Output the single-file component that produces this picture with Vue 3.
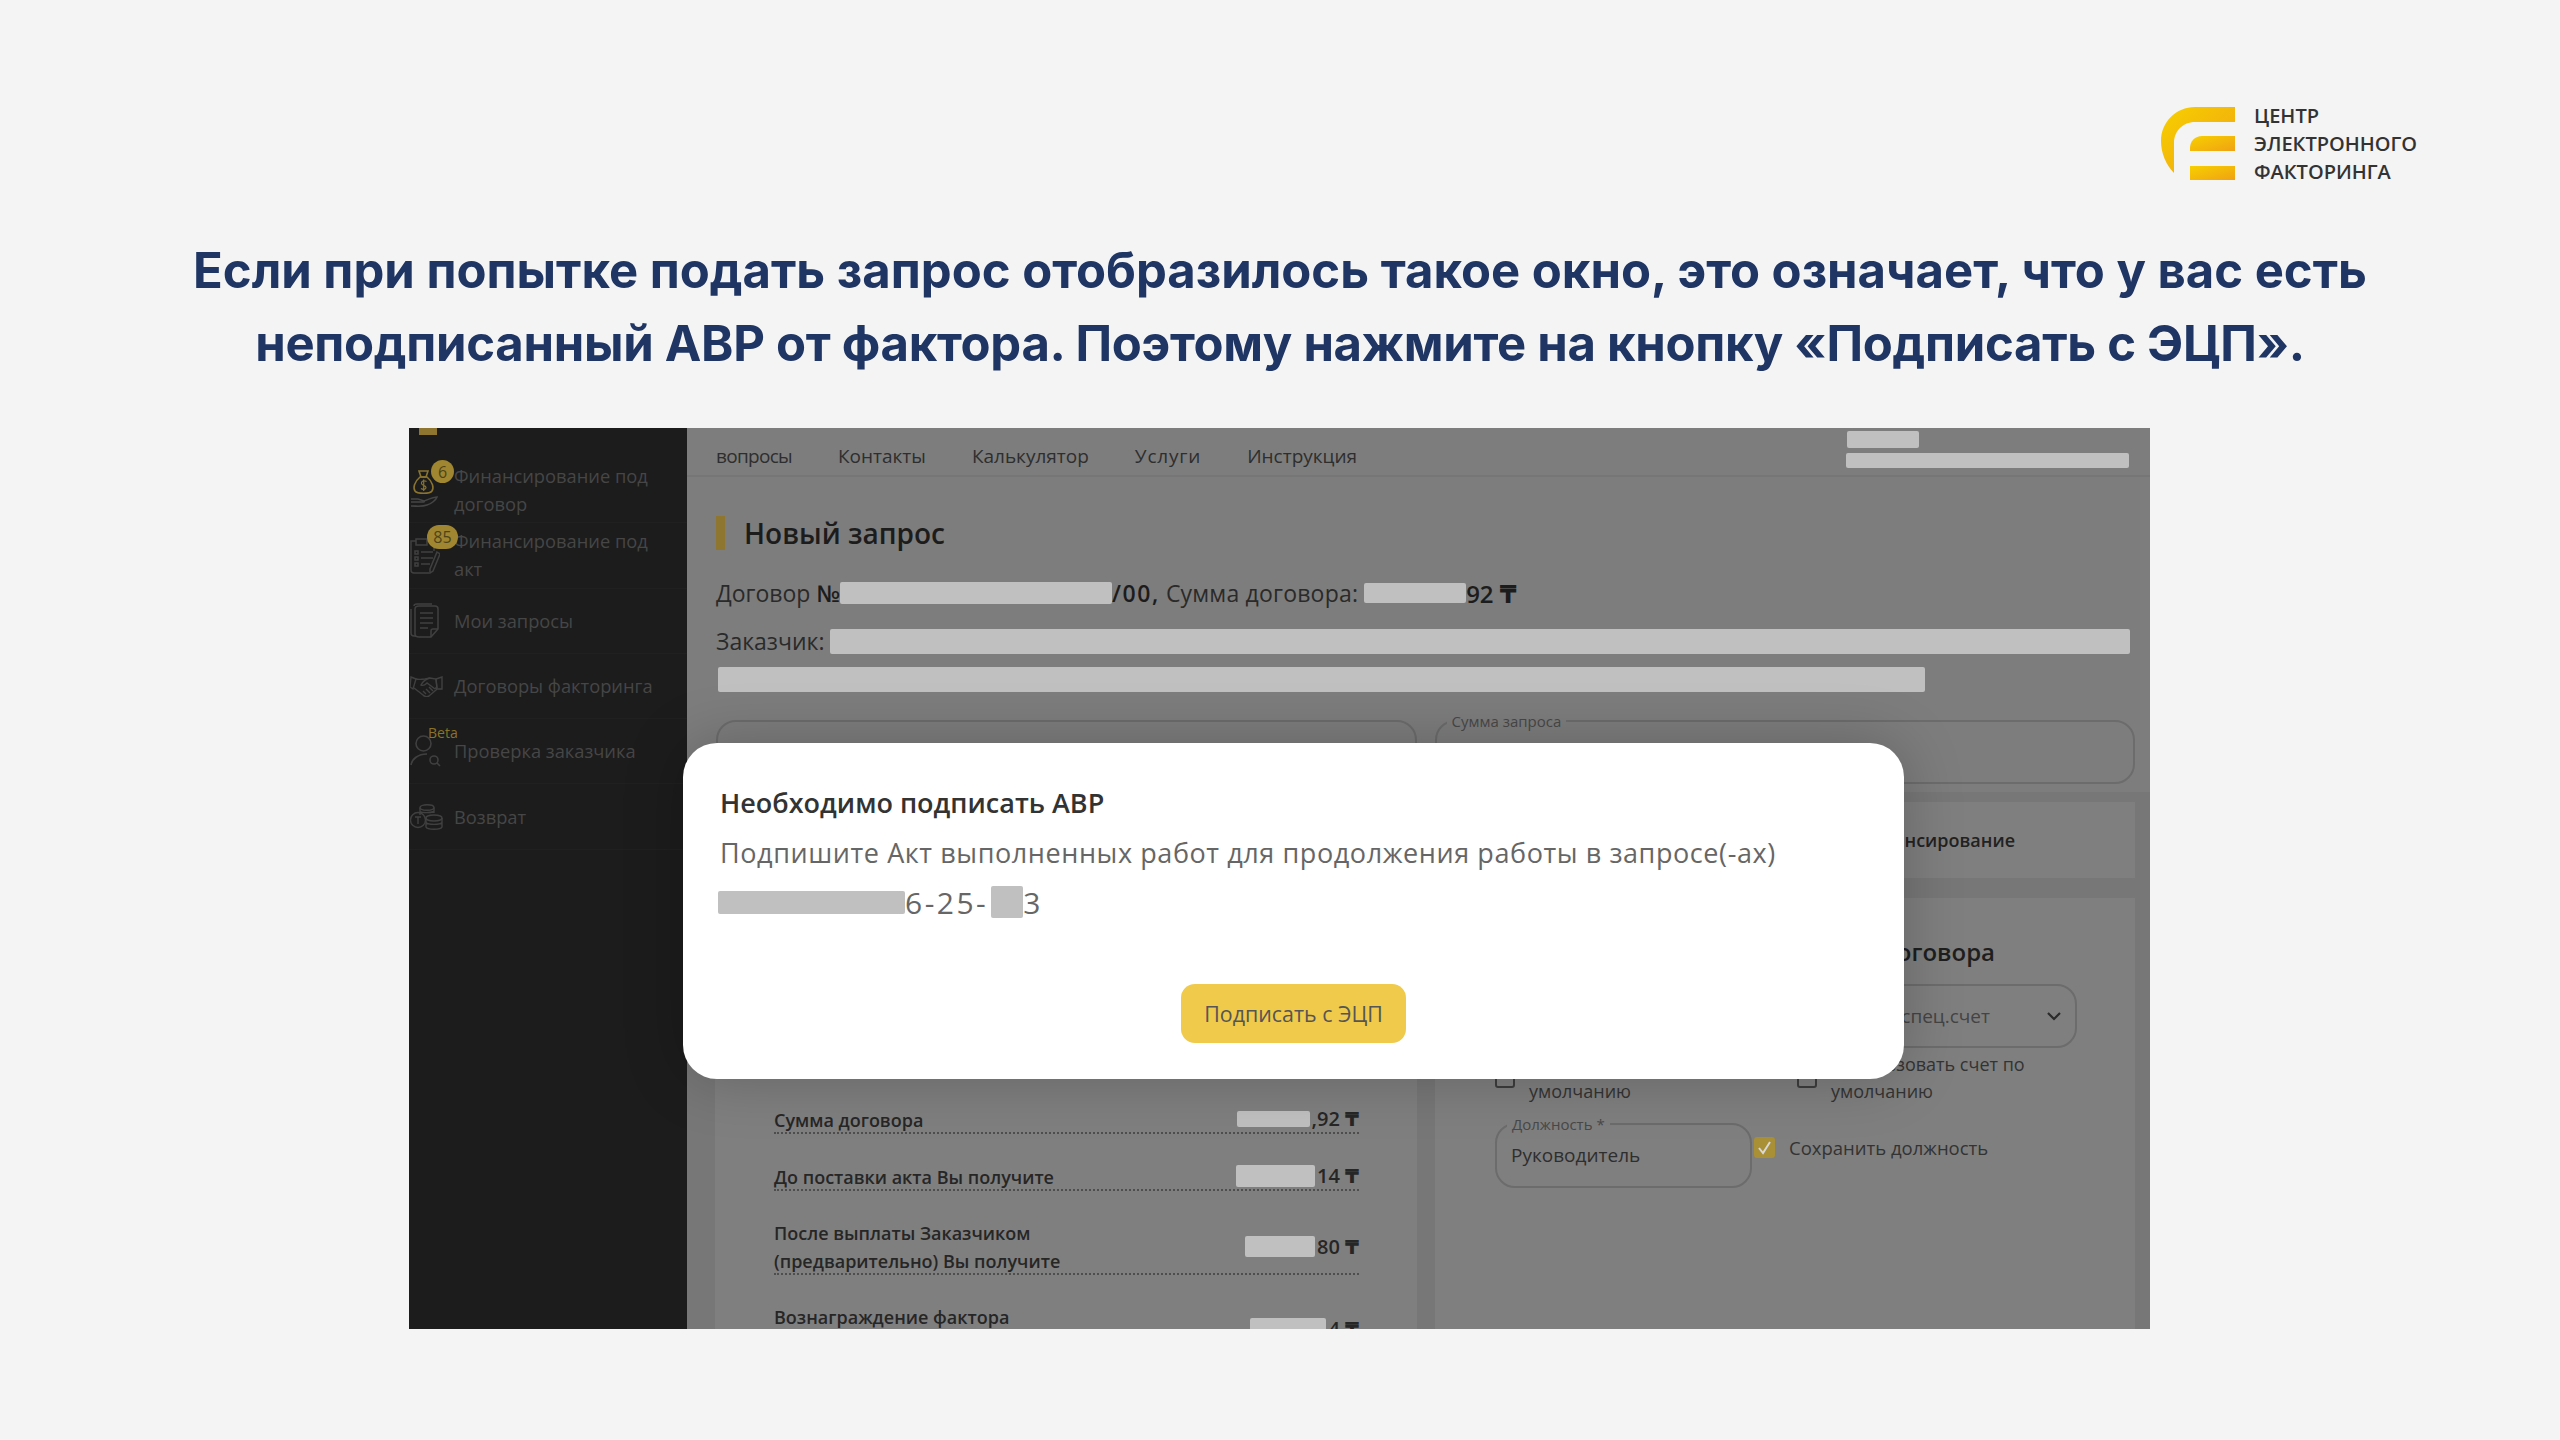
<script setup>
// строки расчёта в левой карточке
const calcRows = [
  { lines: ['Сумма договора'], hidden: 73, hiddenH: 16, tail: ',92 ₸' },
  { lines: ['До поставки акта Вы получите'], hidden: 79, hiddenH: 22, tail: '14 ₸' },
  { lines: ['После выплаты Заказчиком', '(предварительно) Вы получите'], hidden: 70, hiddenH: 21, tail: '80 ₸' },
  { lines: ['Вознаграждение фактора'], hidden: 76, hiddenH: 22, tail: '4 ₸' }
]
const navLinks = ['вопросы', 'Контакты', 'Калькулятор', 'Услуги', 'Инструкция']
</script>

<template>
  <div class="page">
    <header class="brand">
      <svg class="brand-mark" viewBox="0 0 74 73" width="74" height="73">
        <defs>
          <linearGradient id="logoFill" x1="0" y1="0" x2="1" y2="1">
            <stop offset="0" stop-color="#f7d000" />
            <stop offset="1" stop-color="#f0a212" />
          </linearGradient>
        </defs>
        <path fill="url(#logoFill)" d="M74 0H34C15 0 0 15 0 34C0 46 5 58 13 66V36C13 24 22 15 34 15H74Z" />
        <path fill="url(#logoFill)" d="M29 44V41C29 34 34 29 41 29H74V44Z" />
        <path fill="url(#logoFill)" d="M29 59H74V73H29Z" />
      </svg>
      <div class="brand-name">ЦЕНТР<br />ЭЛЕКТРОННОГО<br />ФАКТОРИНГА</div>
    </header>

    <h1 class="headline">
      Если при попытке подать запрос отобразилось такое окно, это означает, что у вас есть<br />
      <span class="headline-second">неподписанный АВР от фактора. Поэтому нажмите на кнопку «Подписать с ЭЦП».</span>
    </h1>

    <section class="shot">
      <aside class="sidebar">
        <span class="side-stub"></span>
        <div class="side-item">
          <svg class="side-icon" viewBox="0 0 30 42" width="30" height="42" fill="none" stroke-width="1.6">
            <g stroke="#8a7430">
              <path d="M9 2H18L16 8H11Z" />
              <path d="M10 8C4 13 3 19 5 22C7 25 20 25 22 22C24 19 23 13 17 8Z" />
              <path d="M16.500 12.500C14 11 11 12 11.500 14.500C12 17 16 16 16 18.500C16 20.500 13 21 11 19.500M13.700 10.500V22" stroke-width="1.200" />
            </g>
            <g stroke="#454545">
              <path d="M1 30H8L14 32C17 31 23 28 27 28C26 31 21 35 17 36C12 38 7 37 1 37" />
              <path d="M1 33H11C13 33 15 33 14 32" />
            </g>
          </svg>
          <span class="side-text">Финансирование под<br />договор</span>
          <span class="side-badge badge-round">6</span>
        </div>
        <div class="side-item">
          <svg class="side-icon" viewBox="0 0 30 37" width="30" height="37" fill="none" stroke="#404040" stroke-width="1.5">
            <path d="M6 4H1V33C1 35 2 36 4 36H19" />
            <path d="M17 4H24V14" />
            <path d="M6 8H17V2H6Z" />
            <path d="M5 14H8V17H5ZM5 20H8V23H5ZM5 26H8V29H5Z" />
            <path d="M11 15H23M11 21H23M11 27H20" />
            <path d="M27 15L30 17L23 34L20 36L20 32Z" />
          </svg>
          <span class="side-text">Финансирование под<br />акт</span>
          <span class="side-badge badge-pill">85</span>
        </div>
        <div class="side-item">
          <svg class="side-icon" viewBox="0 0 30 36" width="30" height="36" fill="none" stroke="#404040" stroke-width="1.5">
            <path d="M1 6V30C1 32 2 33 4 33H6" />
            <path d="M4 3C4 2 5 1 7 1H22" />
            <path d="M9 3H25C27 3 28 4 28 6V26L21 34H9C6 34 5 33 5 31V6C5 4 7 3 9 3Z" />
            <path d="M21 34V28C21 27 22 26 23 26H28" />
            <path d="M10 10H23M10 15H23M10 20H23M10 25H18" />
          </svg>
          <span class="side-text">Мои запросы</span>
        </div>
        <div class="side-item">
          <svg class="side-icon" viewBox="0 0 33 21" width="33" height="21" fill="none" stroke="#404040" stroke-width="1.4">
            <path d="M1 1L6 3L3 13L0 11Z" />
            <path d="M32 1L26 3L27 13L32 13Z" />
            <path d="M6 3C9 4 12 3 15 3L20 2L26 3L27 12" />
            <path d="M4 12L13 19C15 21 17 21 19 20L26 14C27 13 26 12 25 12" />
            <path d="M20 2C16 3 13 5 11 9C13 10 15 9 17 7L25 13" />
            <path d="M13 15L16 18M16 13L20 17M19 11L23 15" />
          </svg>
          <span class="side-text">Договоры факторинга</span>
        </div>
        <div class="side-item">
          <svg class="side-icon" viewBox="0 0 31 32" width="31" height="32" fill="none" stroke="#404040" stroke-width="1.6">
            <circle cx="13.500" cy="8.500" r="7.500" />
            <path d="M1 30C2 24 8 19 17 19" />
            <circle cx="24" cy="25" r="4" />
            <path d="M27 28L30 31" />
          </svg>
          <span class="side-text">Проверка заказчика</span>
          <span class="side-beta">Beta</span>
        </div>
        <div class="side-item">
          <svg class="side-icon" viewBox="0 0 33 26" width="33" height="26" fill="none" stroke="#404040" stroke-width="1.4">
            <ellipse cx="17" cy="3.500" rx="7" ry="2.700" />
            <path d="M10 3.500V11M24 3.500V9M10 7.500C12 9 20 9 24 7.500" />
            <circle cx="8" cy="16" r="7.500" />
            <path d="M5 13H11M8 13V20" />
            <ellipse cx="24" cy="14" rx="8" ry="3" />
            <path d="M16 14V23C17 26 31 26 32 23V14M16 18.500C18 21 30 21 32 18.500" />
          </svg>
          <span class="side-text">Возврат</span>
        </div>
      </aside>

      <div class="main">
        <nav class="topbar">
          <div class="nav-links">
            <span v-for="link in navLinks" :key="link">{{ link }}</span>
          </div>
          <div class="account">
            <span class="mask account-a"></span>
            <span class="mask account-b"></span>
          </div>
        </nav>

        <div class="request">
          <h2 class="request-title">Новый запрос</h2>
          <div class="info-line">
            Договор&nbsp;<b>№</b><span class="mask contract-no"></span><b class="contract-tail">/00,</b>&nbsp;<span class="contract-label">Сумма договора:</span><span class="mask contract-sum"></span><b class="sum-tail">92 ₸</b>
          </div>
          <div class="info-line customer">Заказчик:<span class="mask customer-name"></span></div>
          <span class="mask customer-extra"></span>
          <div class="field-row">
            <div class="field"></div>
            <div class="field">
              <span class="field-label">Сумма запроса</span>
            </div>
          </div>
        </div>

        <div class="lower">
          <div class="card calc">
            <div v-for="row in calcRows" :key="row.tail" class="calc-row">
              <div class="calc-label">
                <div v-for="line in row.lines" :key="line">{{ line }}</div>
              </div>
              <div class="calc-value">
                <span class="mask" :style="{ width: row.hidden + 'px', height: row.hiddenH + 'px' }"></span>
                <b>{{ row.tail }}</b>
              </div>
            </div>
          </div>

          <div class="right-col">
            <div class="card tab-card">Финансирование</div>
            <div class="card details">
              <h3 class="details-title">Реквизиты договора</h3>
              <div class="select">
                <span>Основной спец.счет</span>
                <svg viewBox="0 0 14 9" width="14" height="9" fill="none" stroke="#2b2b2b" stroke-width="2.200">
                  <path d="M1 1L7 7L13 1" />
                </svg>
              </div>
              <div class="defaults">
                <div class="default-item">
                  <span class="box"></span>
                  <span>Использовать счет по<br />умолчанию</span>
                </div>
                <div class="default-item">
                  <span class="box"></span>
                  <span>Использовать счет по<br />умолчанию</span>
                </div>
              </div>
              <div class="position-row">
                <div class="field position-field">
                  <span class="field-label">Должность *</span>
                  Руководитель
                </div>
                <span class="box-checked">
                  <svg viewBox="0 0 21 21" width="21" height="21" fill="none" stroke="#d8d8d8" stroke-width="2">
                    <path d="M5 11L9 16L16 5" />
                  </svg>
                </span>
                <span class="position-save">Сохранить должность</span>
              </div>
            </div>
          </div>
        </div>

        <div class="modal">
          <h3 class="modal-title">Необходимо подписать АВР</h3>
          <p class="modal-text">Подпишите Акт выполненных работ для продолжения работы в запросе(-ах)</p>
          <p class="modal-number">
            <span class="mask number-a"></span>6-25-<span class="mask number-b"></span>3
          </p>
          <button class="modal-btn">Подписать с ЭЦП</button>
        </div>
      </div>
    </section>
  </div>
</template>

<style scoped>
.page {
  width: 2560px;
  height: 1440px;
  background: #f4f4f4;
  font-family: "Open Sans", "DejaVu Sans", sans-serif;
  overflow: hidden;
}

/* логотип */
.brand {
  display: flex;
  justify-content: flex-end;
  align-items: flex-start;
  gap: 19px;
  padding: 102px 144px 0 0;
}
.brand-mark {
  flex: none;
  display: block;
  margin-top: 5px;
}
.brand-name {
  font-size: 20px;
  line-height: 28px;
  font-weight: 600;
  color: #333;
  width: 162px;
  white-space: nowrap;
}

.headline {
  margin: 48px 0 0;
  font-family: Inter, "Liberation Sans", sans-serif;
  font-size: 49px;
  line-height: 73px;
  font-weight: 700;
  color: #1f3564;
  text-align: center;
  white-space: nowrap;
}
.headline-second {
  letter-spacing: -0.28px;
}

/* скриншот */
.shot {
  display: flex;
  width: 1741px;
  height: 901px;
  margin: 48px 0 0 409px;
  background: #7d7d7d;
  overflow: hidden;
}

.sidebar {
  position: relative;
  flex: none;
  width: 278px;
  padding-top: 30px;
  box-sizing: border-box;
  background: #1c1c1c;
}
.side-stub {
  position: absolute;
  top: 0;
  left: 10px;
  width: 18px;
  height: 7px;
  background: #8f7630;
}
.side-item {
  position: relative;
  display: flex;
  align-items: center;
  height: 65.3px;
  box-sizing: border-box;
  border-bottom: 1px solid #202020;
}
.side-icon {
  flex: none;
  display: block;
  margin-left: 1px;
  margin-right: auto;
}
.side-text {
  flex: none;
  width: 233px;
  font-size: 18.300px;
  line-height: 28px;
  color: #464646;
  white-space: nowrap;
}
.side-badge {
  position: absolute;
  display: flex;
  align-items: center;
  justify-content: center;
  background: #a08630;
  color: #4e4418;
  font-size: 16px;
}
.badge-round {
  top: 2px;
  left: 22px;
  width: 23px;
  height: 23px;
  border-radius: 50%;
}
.badge-pill {
  top: 2px;
  left: 18px;
  width: 31px;
  height: 24px;
  border-radius: 12px;
}
.side-beta {
  position: absolute;
  top: 4px;
  left: 19px;
  font-size: 14px;
  line-height: 20px;
  color: #8a7326;
}

.main {
  position: relative;
  flex: 1;
  display: flex;
  flex-direction: column;
  min-width: 0;
}

.topbar {
  flex: none;
  display: flex;
  justify-content: space-between;
  height: 49px;
  box-sizing: border-box;
  padding: 3px 21px 0 29px;
  border-bottom: 2px solid #767676;
}
.nav-links {
  display: flex;
  gap: 46px;
  padding-top: 12px;
  font-size: 19px;
  line-height: 26px;
  color: #2e2e2e;
}
.nav-links span:first-child {
  letter-spacing: -0.7px;
}
.nav-links span:nth-child(4) {
  letter-spacing: 0.8px;
}
.account {
  display: flex;
  flex-direction: column;
  gap: 5px;
}

.mask {
  display: inline-block;
  flex: none;
  background: #c0c0c0;
  border-radius: 2px;
}
.account-a {
  width: 72px;
  height: 17px;
  margin-left: 1px;
}
.account-b {
  width: 283px;
  height: 15px;
}

.request {
  flex: none;
  padding: 39px 15px 0 29px;
}
.request-title {
  margin: 0;
  height: 34px;
  padding-left: 19px;
  border-left: 9px solid #8f7630;
  box-sizing: border-box;
  font-size: 28px;
  line-height: 34px;
  font-weight: 600;
  color: #1c1c1c;
}
.info-line {
  display: flex;
  align-items: center;
  height: 30px;
  margin-top: 28px;
  font-size: 23px;
  color: #2a2a2a;
  white-space: nowrap;
}
.info-line b {
  font-weight: 600;
  color: #1c1c1c;
}
.contract-tail {
  letter-spacing: 1.6px;
}
.contract-label {
  letter-spacing: 0.2px;
}
.sum-tail {
  font-size: 24px;
}
.customer {
  margin-top: 18px;
}
.contract-no {
  width: 272px;
  height: 22px;
}
.contract-sum {
  width: 102px;
  height: 20px;
  margin-left: 6px;
}
.customer-name {
  flex: 1;
  height: 25px;
  margin: 0 5px 0 6px;
}
.customer-extra {
  display: block;
  width: 1207px;
  height: 25px;
  margin: 11px 0 0 2px;
}
.field-row {
  display: flex;
  gap: 18px;
  margin-top: 28px;
}
.field {
  position: relative;
  flex: 1;
  height: 64px;
  box-sizing: border-box;
  border: 2px solid #6c6c6c;
  border-radius: 20px;
}
.field-label {
  position: absolute;
  top: -11px;
  left: 10px;
  padding: 0 5px;
  background: #7d7d7d;
  font-size: 15px;
  line-height: 20px;
  color: #484848;
}

.lower {
  flex: 1;
  display: flex;
  gap: 18px;
  min-height: 0;
  margin-top: 8px;
  padding: 10px 15px 0 28px;
  background: #777;
}
.card {
  background: #7f7f7f;
}
.calc {
  flex: none;
  width: 702px;
  box-sizing: border-box;
  padding: 303px 58px 0 59px;
}
.calc-row {
  display: flex;
  justify-content: space-between;
  align-items: center;
  margin-bottom: 28px;
  border-bottom: 2px dotted #4e4e4e;
}
.calc-row:last-child {
  align-items: flex-start;
  border-bottom: 0;
}
.calc-row:last-child .calc-value {
  margin-top: 12px;
}
.calc-label {
  margin-bottom: -2px;
  font-size: 18px;
  line-height: 28px;
  font-weight: 600;
  color: #262626;
}
.calc-row:last-child .calc-label {
  margin-top: 2px;
  line-height: 24px;
}
.calc-value {
  display: flex;
  align-items: center;
  gap: 2px;
  font-size: 20px;
  color: #262626;
}
.calc-value b {
  font-weight: 600;
}

.right-col {
  flex: 1;
  display: flex;
  flex-direction: column;
  gap: 20px;
}
.tab-card {
  flex: none;
  height: 76px;
  display: flex;
  align-items: center;
  justify-content: flex-end;
  padding-right: 120px;
  font-size: 18px;
  font-weight: 600;
  color: #222;
}
.details {
  flex: 1;
  padding: 37px 0 0 60px;
}
.details-title {
  margin: 0;
  padding-right: 140px;
  font-size: 24px;
  line-height: 34px;
  font-weight: 600;
  text-align: right;
  color: #1e1e1e;
}
.select {
  display: flex;
  justify-content: flex-end;
  align-items: center;
  gap: 57px;
  width: 582px;
  height: 64px;
  margin-top: 15px;
  padding-right: 14px;
  box-sizing: border-box;
  border: 2px solid #6c6c6c;
  border-radius: 20px;
  font-size: 19px;
  color: #444;
}
.defaults {
  display: flex;
  margin-top: 3px;
}
.default-item {
  display: flex;
  align-items: center;
  gap: 14px;
  width: 302px;
  font-size: 18px;
  line-height: 27px;
  color: #333;
}
.box {
  flex: none;
  width: 20px;
  height: 20px;
  box-sizing: border-box;
  border: 2px solid #3d3d3d;
  border-radius: 3px;
}
.position-row {
  display: flex;
  align-items: flex-start;
  margin-top: 18px;
}
.position-field {
  flex: none;
  width: 257px;
  height: 65px;
  padding: 17px 0 0 14px;
  font-size: 19px;
  line-height: 26px;
  color: #2e2e2e;
}
.position-field .field-label {
  background: #7f7f7f;
}
.box-checked {
  flex: none;
  width: 21px;
  height: 21px;
  margin: 14px 0 0 2px;
  background: #a98f36;
  border-radius: 3px;
}
.box-checked svg {
  display: block;
}
.position-save {
  margin: 11px 0 0 14px;
  font-size: 18.500px;
  line-height: 27px;
  color: #333;
}

/* окно */
.modal {
  position: absolute;
  left: -4px;
  top: 315px;
  width: 1221px;
  height: 336px;
  box-sizing: border-box;
  padding: 42px 37px 0;
  background: #fff;
  border-radius: 34px;
  box-shadow: 0 0 60px rgba(0, 0, 0, 0.22);
  display: flex;
  flex-direction: column;
}
.modal-title {
  margin: 0;
  font-size: 27px;
  line-height: 36px;
  font-weight: 600;
  color: #333;
}
.modal-text {
  margin: 14px 0 0;
  font-size: 27px;
  line-height: 36px;
  letter-spacing: 0.58px;
  color: #666;
  white-space: nowrap;
}
.modal-number {
  display: flex;
  align-items: center;
  height: 36px;
  margin: 13px 0 0 -2px;
  font-size: 30px;
  letter-spacing: 2.500px;
  color: #666;
}
.number-a {
  width: 187px;
  height: 23px;
}
.number-b {
  width: 32px;
  height: 32px;
  margin-left: 3px;
}
.modal-btn {
  align-self: center;
  width: 225px;
  height: 59px;
  margin: 64px 0 0;
  padding: 0;
  border: 0;
  border-radius: 14px;
  background: #f0ca4b;
  font-family: inherit;
  font-size: 21.400px;
  color: #555;
}
</style>

<style>
html, body {
  margin: 0;
  background: #f4f4f4;
}
</style>
